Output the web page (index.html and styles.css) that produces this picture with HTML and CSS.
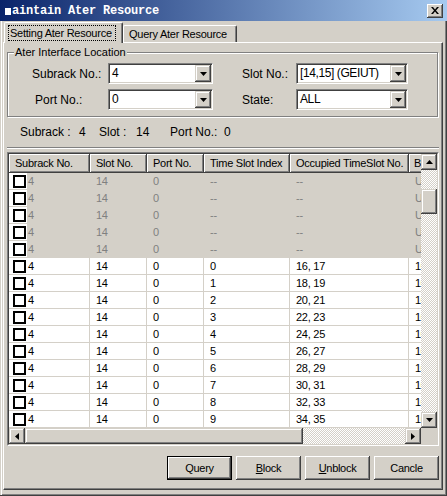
FILE: index.html
```html
<!DOCTYPE html>
<html>
<head>
<meta charset="utf-8">
<title>Maintain Ater Resource</title>
<link rel="stylesheet" href="styles.css">
</head>
<body>
<div class="window">
  <div class="titlebar">
    <div class="title"><span class="glyph"></span>aintain Ater Resource</div>
    <div class="close"><svg width="8" height="7" viewBox="0 0 8 7"><path d="M0 0h2l2 2.5L6 0h2L5 3.5 8 7H6L4 4.5 2 7H0l3-3.5z" fill="#000"/></svg></div>
  </div>
  <div class="body">
    <div class="tabs">
      <div class="tab active"><span class="focus">Setting Ater Resource</span></div>
      <div class="tab">Query Ater Resource</div>
    </div>
    <div class="panel">
      <fieldset class="group">
        <legend>Ater Interface Location</legend>
        <div class="form">
          <label class="lbl">Subrack No.:</label>
          <div class="combo"><span class="val">4</span><span class="drop"><svg width="7" height="4" viewBox="0 0 7 4"><path d="M0 0h7L3.5 4z"/></svg></span></div>
          <span></span>
          <label class="lbl">Slot No.:</label>
          <div class="combo"><span class="val">[14,15] (GEIUT)</span><span class="drop"><svg width="7" height="4" viewBox="0 0 7 4"><path d="M0 0h7L3.5 4z"/></svg></span></div>
          <label class="lbl l2">Port No.:</label>
          <div class="combo"><span class="val">0</span><span class="drop"><svg width="7" height="4" viewBox="0 0 7 4"><path d="M0 0h7L3.5 4z"/></svg></span></div>
          <span></span>
          <label class="lbl">State:</label>
          <div class="combo"><span class="val">ALL</span><span class="drop"><svg width="7" height="4" viewBox="0 0 7 4"><path d="M0 0h7L3.5 4z"/></svg></span></div>
        </div>
      </fieldset>
      <div class="info">
        <span class="i1">Subrack :</span><span class="i2">4</span><span class="i3">Slot :</span><span class="i4">14</span><span class="i5">Port No.:</span><span>0</span>
      </div>
      <div class="frame">
        <div class="frame-in">
          <div class="list-area">
            <div class="clip">
              <div class="hdr">
                <div class="h w1">Subrack No.</div>
                <div class="h w2">Slot No.</div>
                <div class="h w3">Port No.</div>
                <div class="h w4">Time Slot Index</div>
                <div class="h w5">Occupied TimeSlot No.</div>
                <div class="h w6">B...</div>
              </div>
              <div class="row dis"><div class="c w1 first"><span class="cb"></span>4</div><div class="c w2">14</div><div class="c w3">0</div><div class="c w4">--</div><div class="c w5">--</div><div class="c w6">U</div></div>
              <div class="row dis"><div class="c w1 first"><span class="cb"></span>4</div><div class="c w2">14</div><div class="c w3">0</div><div class="c w4">--</div><div class="c w5">--</div><div class="c w6">U</div></div>
              <div class="row dis"><div class="c w1 first"><span class="cb"></span>4</div><div class="c w2">14</div><div class="c w3">0</div><div class="c w4">--</div><div class="c w5">--</div><div class="c w6">U</div></div>
              <div class="row dis"><div class="c w1 first"><span class="cb"></span>4</div><div class="c w2">14</div><div class="c w3">0</div><div class="c w4">--</div><div class="c w5">--</div><div class="c w6">U</div></div>
              <div class="row dis"><div class="c w1 first"><span class="cb"></span>4</div><div class="c w2">14</div><div class="c w3">0</div><div class="c w4">--</div><div class="c w5">--</div><div class="c w6">U</div></div>
              <div class="row"><div class="c w1 first"><span class="cb"></span>4</div><div class="c w2">14</div><div class="c w3">0</div><div class="c w4">0</div><div class="c w5">16, 17</div><div class="c w6">10</div></div>
              <div class="row"><div class="c w1 first"><span class="cb"></span>4</div><div class="c w2">14</div><div class="c w3">0</div><div class="c w4">1</div><div class="c w5">18, 19</div><div class="c w6">10</div></div>
              <div class="row"><div class="c w1 first"><span class="cb"></span>4</div><div class="c w2">14</div><div class="c w3">0</div><div class="c w4">2</div><div class="c w5">20, 21</div><div class="c w6">10</div></div>
              <div class="row"><div class="c w1 first"><span class="cb"></span>4</div><div class="c w2">14</div><div class="c w3">0</div><div class="c w4">3</div><div class="c w5">22, 23</div><div class="c w6">10</div></div>
              <div class="row"><div class="c w1 first"><span class="cb"></span>4</div><div class="c w2">14</div><div class="c w3">0</div><div class="c w4">4</div><div class="c w5">24, 25</div><div class="c w6">10</div></div>
              <div class="row"><div class="c w1 first"><span class="cb"></span>4</div><div class="c w2">14</div><div class="c w3">0</div><div class="c w4">5</div><div class="c w5">26, 27</div><div class="c w6">10</div></div>
              <div class="row"><div class="c w1 first"><span class="cb"></span>4</div><div class="c w2">14</div><div class="c w3">0</div><div class="c w4">6</div><div class="c w5">28, 29</div><div class="c w6">10</div></div>
              <div class="row"><div class="c w1 first"><span class="cb"></span>4</div><div class="c w2">14</div><div class="c w3">0</div><div class="c w4">7</div><div class="c w5">30, 31</div><div class="c w6">10</div></div>
              <div class="row"><div class="c w1 first"><span class="cb"></span>4</div><div class="c w2">14</div><div class="c w3">0</div><div class="c w4">8</div><div class="c w5">32, 33</div><div class="c w6">10</div></div>
              <div class="row"><div class="c w1 first"><span class="cb"></span>4</div><div class="c w2">14</div><div class="c w3">0</div><div class="c w4">9</div><div class="c w5">34, 35</div><div class="c w6">10</div></div>
            </div>
            <div class="vscroll">
              <div class="sbtn"><svg width="7" height="4" viewBox="0 0 7 4"><path d="M3.5 0L7 4H0z"/></svg></div>
              <div class="track vtrack"><div class="thumb vthumb"></div></div>
              <div class="sbtn"><svg width="7" height="4" viewBox="0 0 7 4"><path d="M0 0h7L3.5 4z"/></svg></div>
            </div>
          </div>
          <div class="hscroll">
            <div class="sbtn"><svg width="4" height="7" viewBox="0 0 4 7"><path d="M4 0v7L0 3.5z"/></svg></div>
            <div class="thumb hthumb"></div>
            <div class="track htrack"></div>
            <div class="sbtn"><svg width="4" height="7" viewBox="0 0 4 7"><path d="M0 0l4 3.5L0 7z"/></svg></div>
            <div class="corner"></div>
          </div>
        </div>
      </div>
      <div class="buttons">
        <button class="btn default">Query</button>
        <button class="btn"><u>B</u>lock</button>
        <button class="btn"><u>U</u>nblock</button>
        <button class="btn">Cancle</button>
      </div>
    </div>
  </div>
</div>
</body>
</html>
```

FILE: styles.css
```css
*, *::before, *::after { box-sizing: border-box; }
html, body { margin: 0; padding: 0; background: #d4d0c8; }
body {
  width: 447px;
  height: 496px;
  overflow: hidden;
  font-family: "Liberation Sans", Arial, sans-serif;
  font-size: 11px;
  letter-spacing: -0.25px;
  color: #000;
}
.window {
  width: 447px;
  height: 496px;
  display: flex;
  flex-direction: column;
  background: #d4d0c8;
  box-shadow: inset -1px -1px #404040, inset 1px 0 #d4d0c8, inset 2px 0 #fff, inset -2px -2px #808080;
}
.titlebar {
  height: 21px;
  flex: none;
  display: flex;
  align-items: center;
  justify-content: space-between;
  padding: 0 4px 0 5px;
  background: linear-gradient(to right, #0a246a, #a6caf0);
}
.title {
  font-family: "Liberation Mono", monospace;
  font-weight: bold;
  font-size: 12px;
  letter-spacing: -0.2px;
  color: #fff;
  display: flex;
  align-items: center;
  line-height: 14px;
}
.glyph {
  width: 6px;
  height: 7px;
  background: #fff;
  margin-right: 1px;
  margin-top: 1px;
}
.close {
  width: 16px;
  height: 14px;
  background: #d4d0c8;
  display: flex;
  align-items: center;
  justify-content: center;
  box-shadow: inset -1px -1px #404040, inset 1px 1px #fff, inset -2px -2px #808080;
}
.body {
  flex: 1;
  display: flex;
  flex-direction: column;
  padding: 0 4px 6px 3px;
}
.tabs {
  height: 21px;
  flex: none;
  display: flex;
  align-items: flex-end;
  padding-left: 1px;
  position: relative;
  z-index: 1;
}
.tab {
  height: 17px;
  width: 114px;
  line-height: 16px;
  padding-left: 5px;
  background: #d4d0c8;
  border-top: 1px solid #fff;
  border-left: 1px solid #fff;
  border-right: 1px solid #404040;
  box-shadow: inset -1px 0 #808080;
  border-radius: 2px 2px 0 0;
  white-space: nowrap;
}
.tab.active {
  height: 21px;
  width: 119px;
  margin-bottom: -1px;
  padding: 2px 0 0 3px;
}
.focus {
  display: inline-block;
  border: 1px dotted #000;
  padding: 0 3px 0 1px;
  line-height: 14px;
}
.panel {
  flex: 1;
  display: flex;
  flex-direction: column;
  border: 1px solid;
  border-color: #fff #404040 #404040 #fff;
  box-shadow: inset -1px -1px #808080;
  padding: 3px 3px 0 3px;
}
.group {
  margin: 0;
  width: 431px;
  padding: 4px 0 6px 6px;
  border: 1px solid #808080;
  box-shadow: inset 1px 1px #fff, 1px 1px #fff;
  min-width: 0;
}
.group legend {
  padding: 0 1px;
  line-height: 13px;
  letter-spacing: 0;
  background: #d4d0c8;
}
.form {
  margin-left: 18px;
  display: grid;
  grid-template-columns: 76px 105px 29px 54px 112px;
  grid-template-rows: 21px 21px;
  row-gap: 5px;
  align-items: center;
}
.lbl {
  font-size: 12px;
  letter-spacing: 0;
  white-space: nowrap;
}
.lbl.l2 { padding-left: 3px; }
.combo {
  height: 21px;
  display: flex;
  align-items: stretch;
  background: #fff;
  border: 1px solid;
  border-color: #808080 #fff #fff #808080;
  box-shadow: inset 1px 1px #404040, inset -1px -1px #d4d0c8;
  padding: 1px;
}
.val {
  flex: 1;
  padding-left: 2px;
  font-size: 12px;
  line-height: 17px;
  letter-spacing: -0.4px;
  white-space: nowrap;
  overflow: hidden;
}
.drop, .sbtn {
  flex: none;
  width: 16px;
  height: 17px;
  background: #d4d0c8;
  display: flex;
  align-items: center;
  justify-content: center;
  box-shadow: inset -1px -1px #404040, inset 1px 1px #d4d0c8, inset -2px -2px #808080, inset 2px 2px #fff;
}
.info {
  height: 31px;
  flex: none;
  display: flex;
  align-items: center;
  padding-left: 13px;
  font-size: 12px;
  letter-spacing: 0;
  border-bottom: 1px solid #808080;
  box-shadow: 0 1px #fff;
}
.info span { white-space: nowrap; }
.i1 { width: 59px; }
.i2 { width: 20px; }
.i3 { width: 37px; }
.i4 { width: 34px; }
.i5 { width: 54px; }
.frame {
  margin-top: 4px;
  width: 432px;
  height: 294px;
  flex: none;
  border: 1px solid;
  border-color: #808080 #fff #fff #808080;
}
.frame-in {
  height: 100%;
  border: 1px solid;
  border-color: #404040 #d4d0c8 #d4d0c8 #404040;
  display: flex;
  flex-direction: column;
  background: #fff;
}
.list-area {
  display: flex;
  height: 274px;
}
.clip {
  width: 412px;
  overflow: hidden;
  flex: none;
}
.hdr, .row {
  display: flex;
  width: 460px;
}
.hdr { height: 19px; }
.h {
  flex: none;
  height: 19px;
  line-height: 18px;
  padding-left: 6px;
  background: #d4d0c8;
  white-space: nowrap;
  overflow: hidden;
  box-shadow: inset -1px -1px #404040, inset 1px 1px #fff, inset -2px -2px #808080;
}
.w1 { width: 81px; }
.w2 { width: 57px; }
.w3 { width: 57px; }
.w4 { width: 86px; }
.w5 { width: 119px; }
.w6 { width: 60px; padding-left: 5px; }
.row {
  height: 17px;
  background: #fff;
}
.row.dis {
  background: #d4d0c8;
  color: #808080;
}
.c {
  flex: none;
  height: 17px;
  line-height: 16px;
  padding-left: 6px;
  border-right: 1px solid #d4d0c8;
  border-bottom: 1px solid #d4d0c8;
  white-space: nowrap;
  overflow: hidden;
}
.c.first {
  padding-left: 0;
  display: flex;
  align-items: flex-start;
}
.cb {
  width: 18px;
  height: 16px;
  background: #fff;
  display: flex;
  align-items: center;
  justify-content: flex-end;
  padding-right: 1px;
  margin-right: 1px;
  flex: none;
}
.cb::after {
  content: "";
  width: 13px;
  height: 13px;
  border: 2px solid #000;
  background: #fff;
}
.vscroll {
  width: 16px;
  flex: none;
  display: flex;
  flex-direction: column;
}
.vscroll .sbtn { height: 16px; }
.track {
  background-color: #d4d0c8;
  background-image: repeating-conic-gradient(#fff 0 25%, #d4d0c8 0 50%);
  background-size: 2px 2px;
}
.vtrack { flex: 1; }
.thumb {
  background: #d4d0c8;
  box-shadow: inset -1px -1px #404040, inset 1px 1px #d4d0c8, inset -2px -2px #808080, inset 2px 2px #fff;
}
.vthumb {
  height: 25px;
  margin-top: 19px;
}
.hscroll {
  height: 16px;
  display: flex;
  flex: none;
  background: #d4d0c8;
}
.hscroll .sbtn { height: 16px; }
.hthumb { width: 278px; flex: none; }
.htrack { flex: 1; }
.corner { width: 16px; flex: none; background: #d4d0c8; }
.buttons {
  margin-top: 10px;
  display: flex;
  justify-content: flex-end;
  gap: 4px;
  width: 432px;
}
.btn {
  width: 65px;
  height: 24px;
  padding: 0;
  border: none;
  background: #d4d0c8;
  font-family: "Liberation Sans", Arial, sans-serif;
  font-size: 11px;
  letter-spacing: -0.3px;
  color: #000;
  box-shadow: inset -1px -1px #404040, inset 1px 1px #fff, inset -2px -2px #808080;
}
.btn.default {
  box-shadow: inset 0 0 0 1px #000, inset -2px -2px #404040, inset 2px 2px #fff, inset -3px -3px #808080;
}
```
